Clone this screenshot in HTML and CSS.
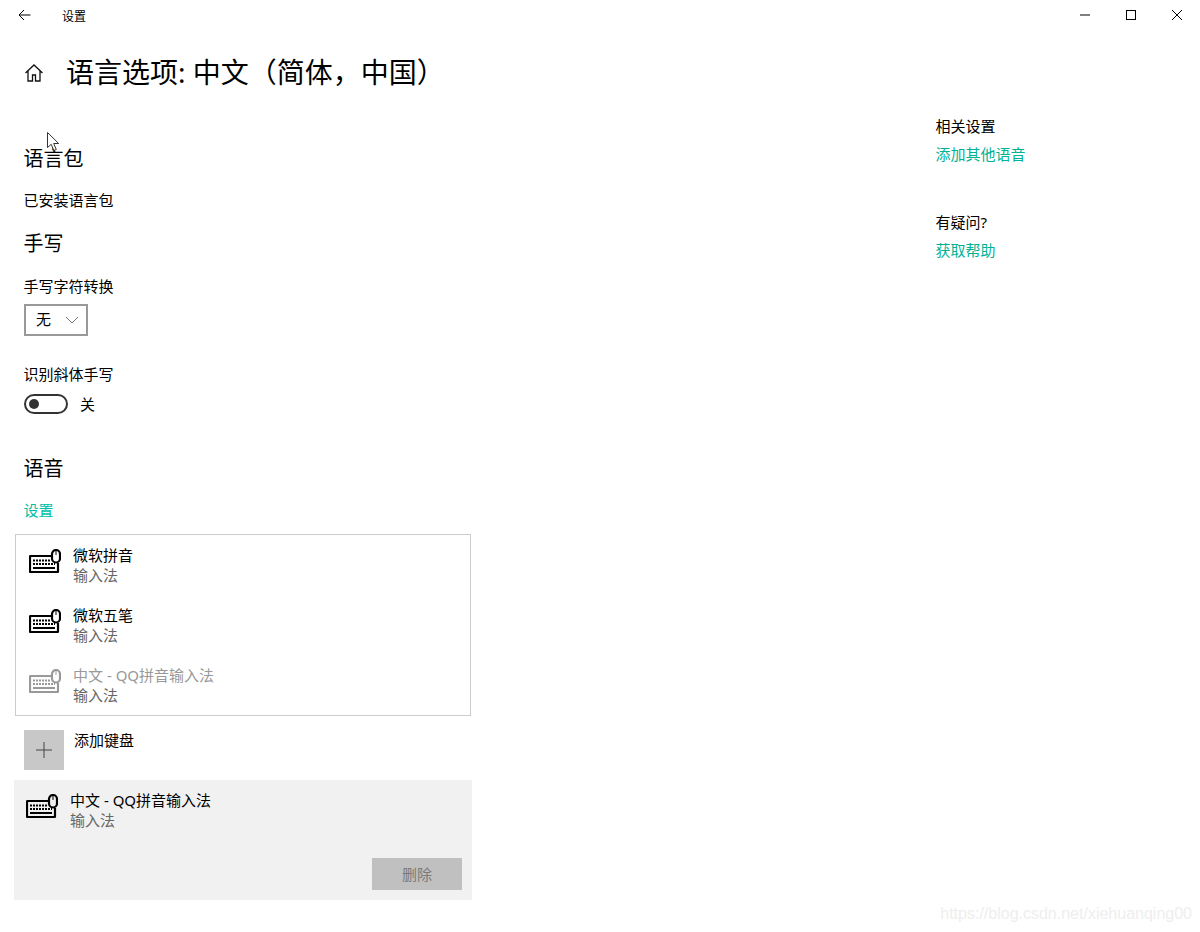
FILE: index.html
```html
<!DOCTYPE html>
<html lang="zh-CN">
<head>
<meta charset="utf-8">
<title>设置</title>
<link rel="stylesheet" href="styles.css">
</head>
<body>
<svg class="defs" width="0" height="0" aria-hidden="true">
  <symbol id="kbd" viewBox="0 0 32 24">
    <path d="M22 7H1.500a.5.5 0 0 0-.5.5V22.500a.5.5 0 0 0 .5.5H28.500a.5.5 0 0 0 .5-.5V14" fill="none" stroke="currentColor" stroke-width="2.200"/>
    <rect x="23" y="1" width="8" height="12.500" rx="4" fill="none" stroke="currentColor" stroke-width="2.200"/>
    <path d="M27 2V6" stroke="currentColor" stroke-width="1"/>
    <path d="M4 11.500H21M4 15H26" fill="none" stroke="currentColor" stroke-width="2" stroke-dasharray="2 1"/>
    <path d="M4 19H26" fill="none" stroke="currentColor" stroke-width="2"/>
  </symbol>
</svg>

<header class="titlebar">
  <svg class="back" width="13" height="12" viewBox="0 0 13 12"><path d="M12.500 6H1M6 1 1 6l5 5" fill="none" stroke="#000" stroke-width="1"/></svg>
  <span class="app-name">设置</span>
  <div class="win-controls">
    <svg width="12" height="12" viewBox="0 0 12 12"><path d="M1 6H11" stroke="#000"/></svg>
    <svg width="12" height="12" viewBox="0 0 12 12"><rect x="1.500" y="1.500" width="9" height="9" fill="none" stroke="#000"/></svg>
    <svg width="12" height="12" viewBox="0 0 12 12"><path d="M1 1 11 11M11 1 1 11" stroke="#000"/></svg>
  </div>
</header>

<div class="page-head">
  <svg class="home" width="20" height="20" viewBox="0 0 20 20"><path d="M1.500 10 10 2l8.500 8M4 8v10h4.500v-6h3v6H16V8" fill="none" stroke="#111" stroke-width="1.300"/></svg>
  <h1 class="page-title">语言选项: 中文（简体，中国）</h1>
</div>

<main class="content">
  <section class="left">
    <h2 class="h-lang">语言包</h2>
    <p class="text m-a">已安装语言包</p>
    <h2 class="h-hand">手写</h2>
    <p class="text m-b">手写字符转换</p>
    <div class="select"><span class="select-value">无</span><svg width="14" height="8" viewBox="0 0 14 8"><path d="M1 1l6 6 6-6" fill="none" stroke="#777"/></svg></div>
    <p class="text m-c">识别斜体手写</p>
    <div class="toggle-row">
      <span class="toggle"><span class="dot"></span></span>
      <span class="text">关</span>
    </div>
    <h2 class="h-voice">语音</h2>
    <a class="link m-d">设置</a>

    <ul class="ime-list">
      <li class="ime"><svg class="kbd"><use href="#kbd"/></svg><div><div class="text">微软拼音</div><div class="sub">输入法</div></div></li>
      <li class="ime"><svg class="kbd"><use href="#kbd"/></svg><div><div class="text">微软五笔</div><div class="sub">输入法</div></div></li>
      <li class="ime off"><svg class="kbd"><use href="#kbd"/></svg><div><div class="text">中文 - QQ拼音输入法</div><div class="sub">输入法</div></div></li>
    </ul>

    <div class="add">
      <span class="add-btn"><svg width="16" height="16" viewBox="0 0 16 16"><path d="M8 0V16M0 8H16" stroke="#444" stroke-width="1"/></svg></span>
      <span class="text">添加键盘</span>
    </div>

    <div class="panel">
      <div class="panel-head"><svg class="kbd"><use href="#kbd"/></svg><div><div class="text">中文 - QQ拼音输入法</div><div class="sub">输入法</div></div></div>
      <button class="remove" type="button">删除</button>
    </div>
  </section>

  <aside class="right">
    <p class="text">相关设置</p>
    <a class="link link-r m-e">添加其他语音</a>
    <p class="text m-f">有疑问?</p>
    <a class="link link-r m-e">获取帮助</a>
  </aside>
</main>

<svg class="cursor" width="14" height="20" viewBox="0 0 14 20"><path d="M.5.500V15.500l3.700-3.200 2.600 6.200 2.500-1-2.600-6h5z" fill="#fff" stroke="#333" stroke-width="1"/></svg>
<div class="watermark">https://blog.csdn.net/xiehuanqing00</div>
</body>
</html>
```
FILE: styles.css
```css
* { box-sizing: border-box; }
html, body { margin: 0; padding: 0; }
body {
  width: 1200px;
  height: 932px;
  overflow: hidden;
  position: relative;
  background: #fff;
  color: #000;
  font-family: "Noto Sans", "Noto Sans CJK SC", sans-serif;
}
.defs { position: absolute; }
h1, h2, p, ul { margin: 0; padding: 0; font-weight: 400; }
ul { list-style: none; }

.titlebar { height: 32px; display: flex; align-items: center; padding-left: 18px; }
.back { display: block; margin-top: -2px; }
.app-name { margin-left: 31px; font-size: 12px; line-height: 16px; margin-top: 1px; }
.win-controls { margin-left: auto; display: flex; gap: 34px; padding-right: 17px; margin-top: -2px; }
.win-controls svg { display: block; }

.page-head { height: 80px; display: flex; align-items: center; padding-left: 24px; }
.home { display: block; margin-top: 1px; }
.page-title { margin-left: 22px; font-size: 28px; line-height: 40px; white-space: nowrap; }

.content { display: flex; padding-left: 24px; }
.left { width: 448px; display: flex; flex-direction: column; align-items: flex-start; }
.right { margin-left: auto; width: 264px; padding-top: 4px; display: flex; flex-direction: column; align-items: flex-start; }

h2 { font-size: 20px; line-height: 28px; margin-left: -0.5px; }
.text { font-size: 15px; line-height: 20px; color: #000; white-space: nowrap; }
p.text { margin-left: -0.5px; }
.sub { font-size: 15px; line-height: 20px; color: #666; white-space: nowrap; }
.link { display: block; font-size: 15px; line-height: 20px; color: #00bfa5; margin-left: -0.5px; }
.link-r { color: #00b294; }

.h-lang { margin-top: 33px; }
.m-a { margin-top: 17px; }
.h-hand { margin-top: 20px; }
.m-b { margin-top: 18px; }
.m-c { margin-top: 28px; }
.h-voice { margin-top: 41px; }
.m-d { margin-top: 17px; }
.m-e { margin-top: 8px; }
.m-f { margin-top: 48px; }

.select {
  margin-top: 8px;
  width: 64px;
  height: 32px;
  border: 2px solid #999;
  display: flex;
  align-items: center;
  padding-left: 10px;
  font-size: 15px;
}
.select-value { margin-top: -4px; }
.select svg { display: block; margin-left: 14px; }

.toggle-row { margin-top: 10px; display: flex; align-items: center; gap: 12px; }
.toggle {
  width: 44px;
  height: 20px;
  border: 2px solid #333;
  border-radius: 10px;
  display: flex;
  align-items: center;
  padding-left: 3px;
}
.dot { width: 10px; height: 10px; border-radius: 50%; background: #333; }

.ime-list { margin: 14px 0 0 -9px; width: 456px; border: 1px solid #ccc; }
.ime { height: 60px; display: flex; padding: 10px 0 0 13px; gap: 12px; }
.kbd { width: 32px; height: 24px; display: block; color: #000; margin-top: 4px; flex: none; }
.off .kbd { color: #999; }
.off .text { color: #999; }

.add { margin-top: 14px; display: flex; gap: 10px; height: 40px; }
.add-btn { width: 40px; height: 40px; background: #c8c8c8; display: flex; align-items: center; justify-content: center; }

.panel {
  margin: 10px 0 0 -10px;
  width: 458px;
  height: 120px;
  background: #f1f1f1;
  display: flex;
  flex-direction: column;
  padding: 10px 10px 10px 12px;
}
.panel-head { display: flex; gap: 12px; }
.remove {
  margin-top: auto;
  align-self: flex-end;
  width: 90px;
  height: 32px;
  border: 0;
  padding: 0 0 2px;
  background: #c0c0c0;
  color: #7a7a7a;
  font: inherit;
  font-size: 15px;
}

.cursor { position: absolute; left: 47px; top: 132px; }
.watermark {
  position: absolute;
  right: 8px;
  top: 904px;
  font-family: "Liberation Sans", sans-serif;
  font-size: 16px;
  line-height: 20px;
  color: #eeeeee;
  white-space: nowrap;
}
```
